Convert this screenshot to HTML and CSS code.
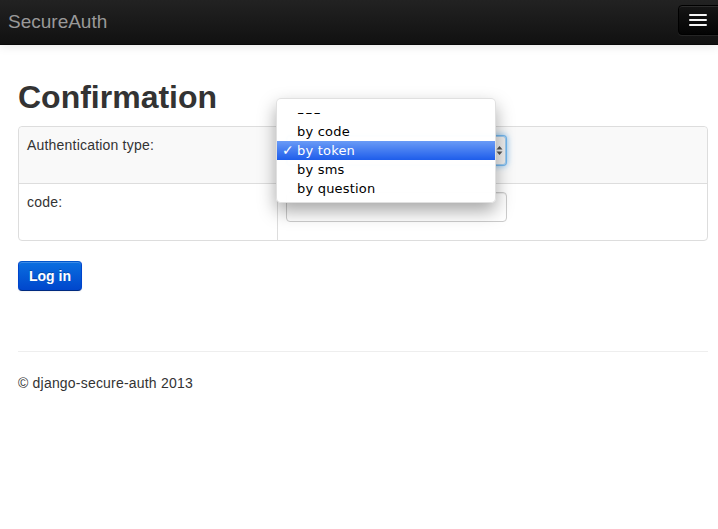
FILE: index.html
```html
<!DOCTYPE html>
<html>
<head>
<meta charset="utf-8">
<title>SecureAuth</title>
<link rel="stylesheet" href="styles.css">
</head>
<body>
<div class="navbar">
  <a class="brand" href="#">SecureAuth</a>
  <button class="btn-navbar" type="button">
    <span class="icon-bar"></span>
    <span class="icon-bar"></span>
    <span class="icon-bar"></span>
  </button>
</div>
<div class="container">
  <h1 class="title">Confirmation</h1>
  <form class="form">
    <table class="form-table">
      <tr class="row row-odd">
        <th class="label-cell">Authentication type:</th>
        <td class="field-cell">
          <div class="select-wrap">
            <div class="select-box">
              <span class="select-arrows">
                <svg width="7" height="11" viewBox="0 0 7 11"><path d="M0.5 4.5 L3.5 1 L6.5 4.5 Z M0.5 6.5 L3.5 10 L6.5 6.5 Z" fill="#555"/></svg>
              </span>
            </div>
            <ul class="popup">
              <li class="opt"><span class="dashes">---</span></li>
              <li class="opt">by code</li>
              <li class="opt opt-selected"><span class="check">✓</span>by token</li>
              <li class="opt">by sms</li>
              <li class="opt">by question</li>
            </ul>
          </div>
        </td>
      </tr>
      <tr class="row">
        <th class="label-cell">code:</th>
        <td class="field-cell"><div class="text-input"></div></td>
      </tr>
    </table>
    <button class="btn-primary" type="button">Log in</button>
  </form>
  <hr class="rule">
  <footer class="footer">
    <p class="copy">© django-secure-auth 2013</p>
  </footer>
</div>
</body>
</html>
```
FILE: styles.css
```css
html, body {
  margin: 0;
  padding: 0;
  background: #fff;
  overflow-x: hidden;
}
body {
  font-family: "Liberation Sans", Arial, Helvetica, sans-serif;
  font-size: 14px;
  line-height: 20px;
  letter-spacing: 0.2px;
  color: #333;
}
.navbar {
  height: 44px;
  border-bottom: 1px solid #0a0a0a;
  background: linear-gradient(#222222, #111111);
  box-shadow: 0 1px 10px rgba(0,0,0,0.1);
  display: flex;
  align-items: center;
  justify-content: space-between;
  overflow: hidden;
}
.brand {
  margin-left: 8px;
  font-size: 19px;
  line-height: 20px;
  letter-spacing: 0;
  color: #999;
  text-decoration: none;
  margin-top: -1px;
}
.btn-navbar {
  width: 44px;
  height: 30px;
  margin: -5px -4px 0 0;
  padding: 7px 10px;
  border: 1px solid #000;
  border-radius: 4px;
  background: linear-gradient(#151515, #040404);
  box-shadow: inset 0 1px 0 rgba(255,255,255,0.1), 0 1px 0 rgba(255,255,255,0.075);
  display: flex;
  flex-direction: column;
  justify-content: center;
  gap: 3px;
}
.icon-bar {
  display: block;
  width: 18px;
  height: 2px;
  border-radius: 1px;
  background: #f5f5f5;
}
.container {
  margin: 0 10px 0 18px;
}
.title {
  margin: 32px 0 9px;
  font-size: 32px;
  line-height: 40px;
  letter-spacing: 0;
  font-weight: bold;
  color: #333;
}
.form {
  margin: 0;
}
.form-table {
  width: 100%;
  border-collapse: separate;
  border-spacing: 0;
  border: 1px solid #ddd;
  border-radius: 4px;
  margin-bottom: 20px;
}
.row-odd {
  background: #f9f9f9;
}
.row-odd .label-cell {
  border-top-left-radius: 4px;
}
.row-odd .field-cell {
  border-top-right-radius: 4px;
}
.label-cell {
  width: 242px;
  padding: 8px;
  text-align: left;
  font-weight: normal;
  vertical-align: top;
  border-right: 1px solid #ddd;
}
.field-cell {
  padding: 8px;
  vertical-align: top;
}
.row + .row .label-cell,
.row + .row .field-cell {
  border-top: 1px solid #ddd;
}
.select-wrap {
  position: relative;
  width: 220px;
  height: 30px;
  margin-bottom: 10px;
}
.select-box {
  box-sizing: border-box;
  width: 221px;
  height: 31px;
  border: 1px solid rgba(82,168,236,0.8);
  border-radius: 4px;
  background: #eeeeee;
  box-shadow: 0 0 6px rgba(82,168,236,0.7), inset 0 0 0 1px rgba(82,168,236,0.5);
  display: flex;
  justify-content: flex-end;
  align-items: center;
  padding-right: 3px;
}
.select-arrows {
  display: flex;
}
.popup {
  position: absolute;
  left: -10px;
  top: -37px;
  width: 220px;
  margin: 0;
  padding: 4px 0;
  list-style: none;
  background: rgba(255,255,255,0.98);
  border: 1px solid rgba(0,0,0,0.12);
  border-radius: 5px;
  box-shadow: 0 8px 18px rgba(0,0,0,0.35);
  box-sizing: border-box;
  z-index: 5;
  font-family: "DejaVu Sans", "Lucida Grande", sans-serif;
  font-size: 13px;
  letter-spacing: 0.2px;
  line-height: 19px;
  color: #000;
}
.opt {
  position: relative;
  height: 19px;
  padding-left: 20px;
}
.dashes {
  display: inline-block;
  letter-spacing: 0.6px;
  transform: scaleX(1.55);
  transform-origin: left center;
}
.opt-selected {
  background: linear-gradient(#6a9bf6, #1e5deb);
  color: #fff;
}
.check {
  position: absolute;
  left: 5px;
  top: 0;
  font-size: 14px;
  font-weight: bold;
}
.text-input {
  box-sizing: border-box;
  width: 221px;
  height: 30px;
  margin-bottom: 10px;
  border: 1px solid #ccc;
  border-radius: 4px;
  background: #fff;
  box-shadow: inset 0 1px 1px rgba(0,0,0,0.075);
}
.btn-primary {
  display: block;
  margin: 0;
  padding: 4px 10px;
  font-family: "Liberation Sans", Arial, sans-serif;
  font-size: 14px;
  font-weight: bold;
  line-height: 20px;
  letter-spacing: 0;
  color: #fff;
  text-shadow: 0 -1px 0 rgba(0,0,0,0.25);
  border: 1px solid #0044cc;
  border-color: #0055cc #0044cc #002a80;
  border-radius: 4px;
  background: linear-gradient(#0a6fe0, #0046cc);
  box-shadow: inset 0 1px 0 rgba(255,255,255,0.2), 0 1px 2px rgba(0,0,0,0.05);
}
.rule {
  margin: 60px 0 0;
  border: 0;
  border-top: 1px solid #eee;
  height: 0;
}
.footer {
  padding-top: 21px;
}
.copy {
  margin: 0;
}
```
